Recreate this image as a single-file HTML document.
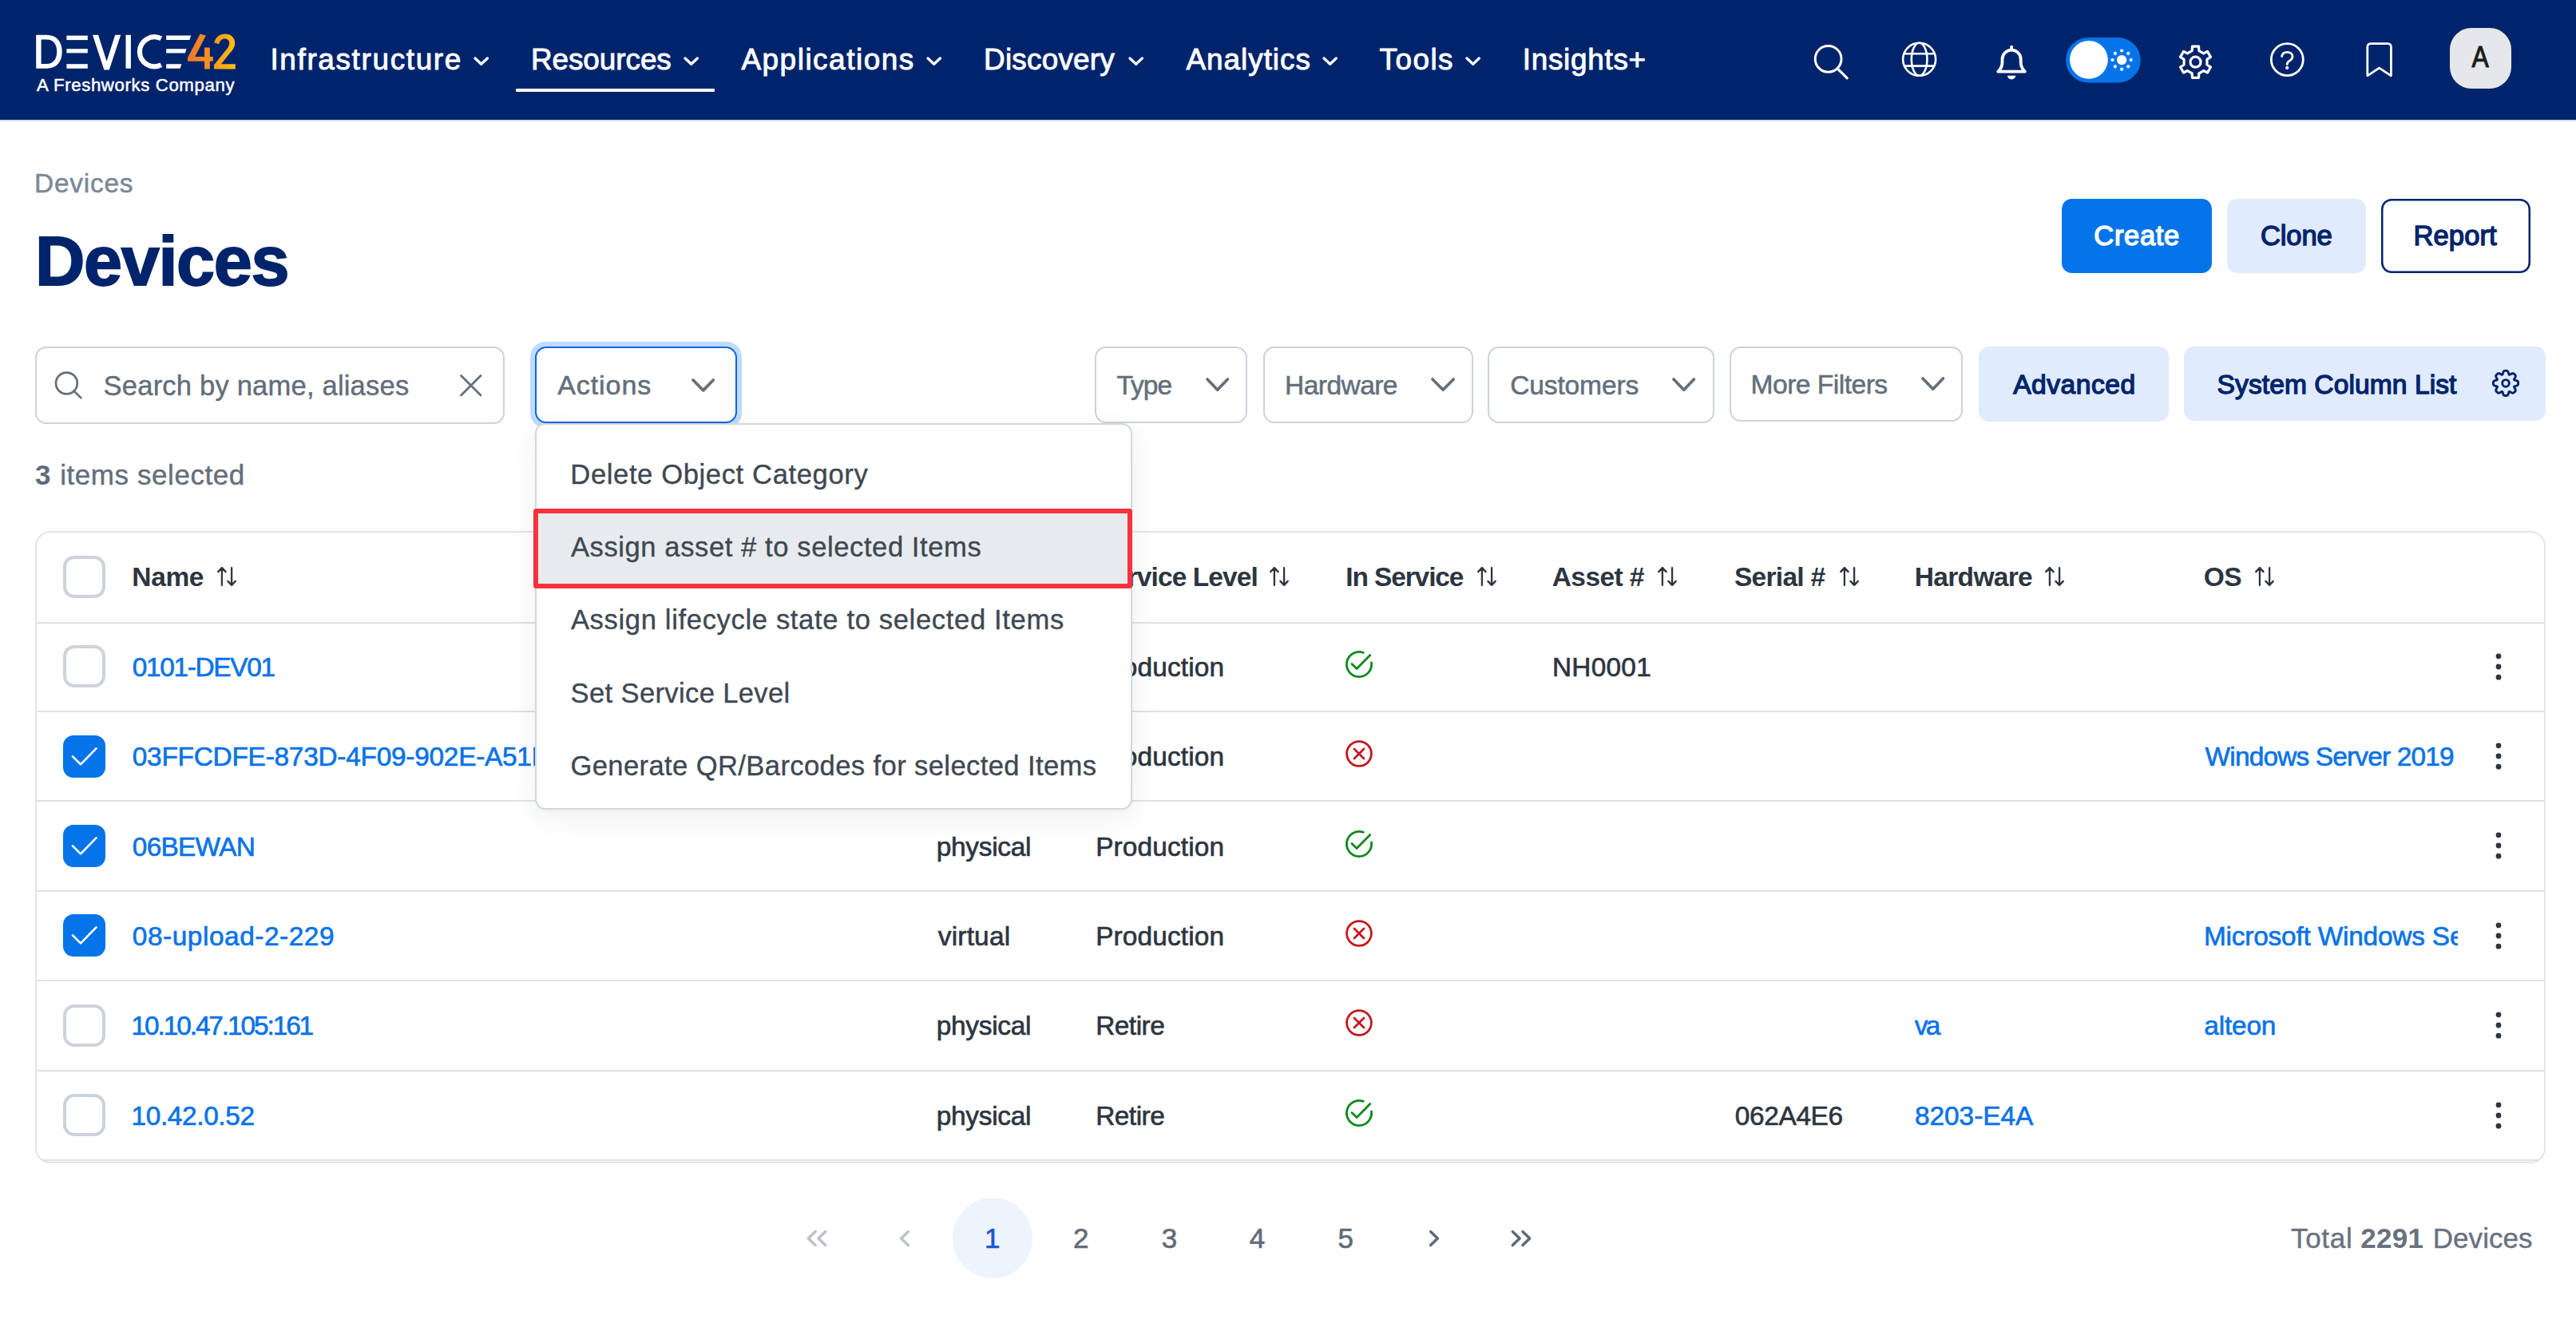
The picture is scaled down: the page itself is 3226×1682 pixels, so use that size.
<!DOCTYPE html>
<html lang="en"><head><meta charset="utf-8"><title>Devices - Device42</title>
<style>
html,body{margin:0;padding:0;background:#fff;}
body{width:3226px;height:1682px;position:relative;overflow:hidden;font-family:"Liberation Sans",sans-serif;}
.t{position:absolute;white-space:nowrap;line-height:1;font-family:"Liberation Sans",sans-serif;}
</style></head><body>
<div style="position:absolute;left:0.0px;top:0.0px;width:3226.0px;height:149.5px;box-sizing:border-box;background:#00246b;"></div><div style="position:absolute;left:0.0px;top:149.5px;width:3226.0px;height:2.0px;box-sizing:border-box;background:#d9dee8;"></div><svg style="position:absolute;left:0.0px;top:0.0px;" width="340.0" height="149.0" viewBox="0 0 340 149" fill="none"><path d="M45.2 43.8h13.5c12 0 19 8.3 19 21s-7 21-19 21H45.2z M51.6 49.6v30.4h7c8 0 12.6-5.8 12.6-15.2s-4.6-15.2-12.6-15.2z" fill="#fff" fill-rule="evenodd"/><rect x="83.4" y="44.6" width="26.4" height="5.5" fill="#fff"/><rect x="83.4" y="61.2" width="26.4" height="5.2" fill="#fff"/><rect x="83.4" y="80.2" width="26.4" height="5.6" fill="#fff"/><path d="M116 43.8h7l10.6 33 10.6-33h7l-14.4 43.8h-6.4z" fill="#fff"/><rect x="157.5" y="43.8" width="6.4" height="42" fill="#fff"/><path d="M201.80 48.32A18.5 18.5 0 1 0 201.80 81.28" stroke="#fff" stroke-width="6.2" fill="none"/><path d="M208.2 44.6h31l-1.8 5.5h-29.2z M208.2 61.2h25.4l-1.8 5.2h-23.6z M208.2 80.2h19.2l-1.8 5.6h-17.4z" fill="#fff"/><defs><linearGradient id="g42" x1="235" y1="0" x2="295" y2="0" gradientUnits="userSpaceOnUse"><stop offset="0" stop-color="#f2762a"/><stop offset="0.5" stop-color="#f7941e"/><stop offset="1" stop-color="#fdc010"/></linearGradient></defs><path d="M250.6 42.4l7.2 2-13.6 26.6h11.8V59.6h6.8v11.4h4v5.8h-4v9.6h-6.8v-9.6h-21v-4.6z" fill="url(#g42)"/><path d="M268.2 53.4c1.6-6.6 6.6-11 13.6-11 7.4 0 12.4 4.8 12.4 11.4 0 5.2-2.6 9-7.6 14.2l-9.6 12.2h17.8v6.2h-26.8v-5.2l13.8-17c3.8-4.4 5.4-7 5.4-10.2 0-3.400-2.200-5.600-5.600-5.600-3.800 0-6.400 2.400-7.400 6.800z" fill="url(#g42)"/></svg><span class="t " style="left:46.0px;top:95.5px;font-size:22.2px;letter-spacing:0.63px;color:#fff;-webkit-text-stroke:0.5px #fff;">A Freshworks Company</span><span class="t " style="left:338.4px;top:56.5px;font-size:36.9px;letter-spacing:1.66px;color:#fff;-webkit-text-stroke:0.9px #fff;">Infrastructure</span><svg style="position:absolute;left:591.8px;top:69.9px;" width="21.4" height="13.2" viewBox="0 0 21.40 13.20" fill="none"><path d="M3 3L10.7 10.2L18.4 3" stroke="#fff" stroke-width="3.3" stroke-linecap="round" stroke-linejoin="round"/></svg><span class="t " style="left:664.9px;top:56.5px;font-size:36.9px;letter-spacing:-0.05px;color:#fff;-webkit-text-stroke:0.9px #fff;">Resources</span><svg style="position:absolute;left:855.3px;top:69.9px;" width="21.4" height="13.2" viewBox="0 0 21.40 13.20" fill="none"><path d="M3 3L10.7 10.2L18.4 3" stroke="#fff" stroke-width="3.3" stroke-linecap="round" stroke-linejoin="round"/></svg><span class="t " style="left:928.4px;top:56.5px;font-size:36.9px;letter-spacing:1.54px;color:#fff;-webkit-text-stroke:0.9px #fff;">Applications</span><svg style="position:absolute;left:1158.6px;top:69.9px;" width="21.4" height="13.2" viewBox="0 0 21.40 13.20" fill="none"><path d="M3 3L10.7 10.2L18.4 3" stroke="#fff" stroke-width="3.3" stroke-linecap="round" stroke-linejoin="round"/></svg><span class="t " style="left:1232.1px;top:56.5px;font-size:36.9px;letter-spacing:0.22px;color:#fff;-webkit-text-stroke:0.9px #fff;">Discovery</span><svg style="position:absolute;left:1411.8px;top:69.9px;" width="21.4" height="13.2" viewBox="0 0 21.40 13.20" fill="none"><path d="M3 3L10.7 10.2L18.4 3" stroke="#fff" stroke-width="3.3" stroke-linecap="round" stroke-linejoin="round"/></svg><span class="t " style="left:1485.5px;top:56.5px;font-size:36.9px;letter-spacing:0.97px;color:#fff;-webkit-text-stroke:0.9px #fff;">Analytics</span><svg style="position:absolute;left:1655.0px;top:69.9px;" width="21.4" height="13.2" viewBox="0 0 21.40 13.20" fill="none"><path d="M3 3L10.7 10.2L18.4 3" stroke="#fff" stroke-width="3.3" stroke-linecap="round" stroke-linejoin="round"/></svg><span class="t " style="left:1727.5px;top:56.5px;font-size:36.9px;letter-spacing:1.48px;color:#fff;-webkit-text-stroke:0.9px #fff;">Tools</span><svg style="position:absolute;left:1833.8px;top:69.9px;" width="21.4" height="13.2" viewBox="0 0 21.40 13.20" fill="none"><path d="M3 3L10.7 10.2L18.4 3" stroke="#fff" stroke-width="3.3" stroke-linecap="round" stroke-linejoin="round"/></svg><span class="t " style="left:1906.8px;top:56.5px;font-size:36.9px;letter-spacing:0.70px;color:#fff;-webkit-text-stroke:0.9px #fff;">Insights+</span><div style="position:absolute;left:646.0px;top:111.0px;width:248.6px;height:4.3px;box-sizing:border-box;background:#fff;border-radius:1px;"></div><svg style="position:absolute;left:2200.0px;top:0.0px;" width="1026.0" height="149.0" viewBox="2200 0 1026 149" fill="none"><circle cx="2289.6" cy="73.8" r="16.4" stroke="#fff" stroke-width="3"/><path d="M2301.6 86.4L2313.2 97.8" stroke="#fff" stroke-width="3.2" stroke-linecap="round"/><g stroke="#fff" stroke-width="2.6"><circle cx="2403.6" cy="74.3" r="20.5"/><ellipse cx="2403.6" cy="74.3" rx="9.8" ry="20.5"/><path d="M2384.6 67.300h38M2384.6 82.600h38"/></g><path d="M2502.300 89.700C2505.500 86.500 2507.500 83 2507.500 78V74.200A11.600 11.600 0 0 1 2530.700 74.200V78C2530.700 83 2532.700 86.500 2535.900 89.700Z" stroke="#fff" stroke-width="3.800" stroke-linejoin="round"/><path d="M2519.100 58.600v3" stroke="#fff" stroke-width="3.800" stroke-linecap="round"/><path d="M2513.900 94.700A5.100 4.700 0 0 0 2524.300 94.700Z" fill="#fff"/><rect x="2587.100" y="47" width="93.600" height="56.600" rx="28.300" fill="#0674e9"/><circle cx="2615.900" cy="74.800" r="23.900" fill="#fff"/><circle cx="2657.100" cy="75.100" r="6.200" fill="#fff"/><circle cx="2668.70" cy="75.10" r="2.100" fill="#fff"/><circle cx="2665.30" cy="83.30" r="2.100" fill="#fff"/><circle cx="2657.10" cy="86.70" r="2.100" fill="#fff"/><circle cx="2648.90" cy="83.30" r="2.100" fill="#fff"/><circle cx="2645.50" cy="75.10" r="2.100" fill="#fff"/><circle cx="2648.90" cy="66.90" r="2.100" fill="#fff"/><circle cx="2657.10" cy="63.50" r="2.100" fill="#fff"/><circle cx="2665.30" cy="66.90" r="2.100" fill="#fff"/><path d="M2753.87 63.56L2753.47 58.10L2745.53 58.10L2745.13 63.56L2739.44 66.84L2734.51 64.46L2730.54 71.34L2735.07 74.42L2735.07 80.98L2730.54 84.06L2734.51 90.94L2739.44 88.56L2745.13 91.84L2745.53 97.30L2753.47 97.30L2753.87 91.84L2759.56 88.56L2764.49 90.94L2768.46 84.06L2763.93 80.98L2763.93 74.42L2768.46 71.34L2764.49 64.46L2759.56 66.84Z" stroke="#fff" stroke-width="3.2" stroke-linejoin="round"/><circle cx="2749.5" cy="77.7" r="6.5" stroke="#fff" stroke-width="3.2"/><circle cx="2864.300" cy="74.600" r="20" stroke="#fff" stroke-width="2.800"/><path d="M2857.600 70.600c0.600-3.400 3.200-5.200 6.800-5.200 3.800 0 6.600 2.200 6.600 5.400 0 2.600-1.600 4.200-4 5.600-2 1.200-2.800 2.200-2.800 4.200" stroke="#fff" stroke-width="2.800" stroke-linecap="round" stroke-linejoin="round"/><circle cx="2864.200" cy="84.900" r="2.100" fill="#fff"/><path d="M2964.800 94.800V58.600a4 4 0 0 1 4-4h21.600a4 4 0 0 1 4 4v36.200l-14.800-9.600z" stroke="#fff" stroke-width="2.800" stroke-linejoin="round"/></svg><div style="position:absolute;left:3068.2px;top:35.0px;width:76.4px;height:75.6px;box-sizing:border-box;background:#e5e7eb;border-radius:27px;"></div><span class="t " style="left:3094.2px;top:53.6px;font-size:36.6px;letter-spacing:0.00px;color:#1b1b1b;-webkit-text-stroke:1.0px #1b1b1b;transform:scaleX(0.87);transform-origin:50% 50%;">A</span><span class="t " style="left:43.0px;top:213.4px;font-size:33.4px;letter-spacing:0.79px;color:#7b8896;-webkit-text-stroke:0.5px #7b8896;">Devices</span><span class="t " style="left:43.9px;top:283.7px;font-size:86.4px;letter-spacing:-1.32px;color:#00246b;font-weight:bold;-webkit-text-stroke:1.8px #00246b;">Devices</span><div style="position:absolute;left:2581.6px;top:249.0px;width:188.0px;height:92.7px;box-sizing:border-box;background:#0674e9;border-radius:12.5px;"></div><span class="t " style="left:2622.3px;top:278.1px;font-size:34.6px;letter-spacing:0.63px;color:#fff;-webkit-text-stroke:1.4px #fff;">Create</span><div style="position:absolute;left:2788.7px;top:249.0px;width:174.0px;height:92.7px;box-sizing:border-box;background:#e0ebfd;border-radius:12.5px;"></div><span class="t " style="left:2830.9px;top:278.1px;font-size:34.6px;letter-spacing:-0.13px;color:#00246b;-webkit-text-stroke:1.4px #00246b;">Clone</span><div style="position:absolute;left:2981.8px;top:249.0px;width:186.8px;height:92.7px;box-sizing:border-box;background:#fff;box-shadow:inset 0 0 0 2.5px #00246b;border-radius:13px;"></div><span class="t " style="left:3022.4px;top:278.1px;font-size:34.6px;letter-spacing:0.11px;color:#00246b;-webkit-text-stroke:1.4px #00246b;">Report</span><div style="position:absolute;left:44.4px;top:434.0px;width:587.6px;height:96.6px;box-sizing:border-box;border:2px solid #ccd3da;border-radius:14px;background:#fff;"></div><svg style="position:absolute;left:64.0px;top:461.0px;" width="44.0" height="44.0" viewBox="0 0 44.00 44.00" fill="none"><circle cx="19.4" cy="19" r="13.4" stroke="#646f7b" stroke-width="2.7"/><path d="M29 29L37.400 37.400" stroke="#646f7b" stroke-width="2.7" stroke-linecap="round"/></svg><span class="t " style="left:129.6px;top:465.5px;font-size:34.6px;letter-spacing:0.18px;color:#626d79;-webkit-text-stroke:0.4px #626d79;">Search by name, aliases</span><svg style="position:absolute;left:572.0px;top:465.0px;" width="36.0" height="36.0" viewBox="0 0 36.00 36.00" fill="none"><path d="M5.500 5.500L30 30M30 5.500L5.500 30" stroke="#646f7b" stroke-width="2.8" stroke-linecap="round"/></svg><div style="position:absolute;left:663.6px;top:428.0px;width:265.4px;height:108.0px;box-sizing:border-box;background:#bfdbfe;border-radius:19px;"></div><div style="position:absolute;left:669.8px;top:433.8px;width:253.4px;height:96.2px;box-sizing:border-box;border:2px solid #0868e0;border-radius:14px;background:#fff;"></div><span class="t " style="left:698.2px;top:464.9px;font-size:34px;letter-spacing:0.93px;color:#646f7b;-webkit-text-stroke:0.6px #646f7b;">Actions</span><svg style="position:absolute;left:865.4px;top:472.6px;" width="31.3" height="18.9" viewBox="0 0 31.30 18.90" fill="none"><path d="M3 3L15.7 15.9L28.3 3" stroke="#646f7b" stroke-width="3.7" stroke-linecap="round" stroke-linejoin="round"/></svg><div style="position:absolute;left:1370.6px;top:434.0px;width:191.6px;height:96.4px;box-sizing:border-box;border:2px solid #ccd3da;border-radius:14px;background:#fff;"></div><span class="t " style="left:1398.5px;top:465.8px;font-size:33.6px;letter-spacing:-1.05px;color:#646f7b;-webkit-text-stroke:0.55px #646f7b;">Type</span><svg style="position:absolute;left:1508.8px;top:472.4px;" width="31.4" height="19.3" viewBox="0 0 31.40 19.30" fill="none"><path d="M3 3L15.7 16.3L28.4 3" stroke="#646f7b" stroke-width="3.7" stroke-linecap="round" stroke-linejoin="round"/></svg><div style="position:absolute;left:1581.5px;top:434.0px;width:263.8px;height:96.4px;box-sizing:border-box;border:2px solid #ccd3da;border-radius:14px;background:#fff;"></div><span class="t " style="left:1609.1px;top:465.8px;font-size:33.6px;letter-spacing:-0.59px;color:#646f7b;-webkit-text-stroke:0.55px #646f7b;">Hardware</span><svg style="position:absolute;left:1790.6px;top:472.4px;" width="32.3" height="19.3" viewBox="0 0 32.30 19.30" fill="none"><path d="M3 3L16.2 16.3L29.3 3" stroke="#646f7b" stroke-width="3.7" stroke-linecap="round" stroke-linejoin="round"/></svg><div style="position:absolute;left:1863.4px;top:434.0px;width:283.8px;height:96.4px;box-sizing:border-box;border:2px solid #ccd3da;border-radius:14px;background:#fff;"></div><span class="t " style="left:1891.2px;top:465.8px;font-size:33.6px;letter-spacing:-0.16px;color:#646f7b;-webkit-text-stroke:0.55px #646f7b;">Customers</span><svg style="position:absolute;left:2092.8px;top:472.4px;" width="31.4" height="19.3" viewBox="0 0 31.40 19.30" fill="none"><path d="M3 3L15.7 16.3L28.4 3" stroke="#646f7b" stroke-width="3.7" stroke-linecap="round" stroke-linejoin="round"/></svg><div style="position:absolute;left:2165.5px;top:434.0px;width:292.1px;height:94.0px;box-sizing:border-box;border:2px solid #ccd3da;border-radius:14px;background:#fff;"></div><span class="t " style="left:2192.5px;top:464.8px;font-size:33.6px;letter-spacing:-0.51px;color:#646f7b;-webkit-text-stroke:0.55px #646f7b;">More Filters</span><svg style="position:absolute;left:2404.8px;top:471.4px;" width="31.4" height="19.3" viewBox="0 0 31.40 19.30" fill="none"><path d="M3 3L15.7 16.3L28.4 3" stroke="#646f7b" stroke-width="3.7" stroke-linecap="round" stroke-linejoin="round"/></svg><div style="position:absolute;left:2478.0px;top:433.9px;width:237.8px;height:94.3px;box-sizing:border-box;background:#e0ebfd;border-radius:12.5px;"></div><span class="t " style="left:2521.2px;top:464.6px;font-size:33.6px;letter-spacing:0.52px;color:#00246b;-webkit-text-stroke:1.35px #00246b;">Advanced</span><div style="position:absolute;left:2735.0px;top:433.9px;width:452.8px;height:93.5px;box-sizing:border-box;background:#e0ebfd;border-radius:12.5px;"></div><span class="t " style="left:2776.6px;top:464.6px;font-size:33.6px;letter-spacing:0.07px;color:#00246b;-webkit-text-stroke:1.35px #00246b;">System Column List</span><svg style="position:absolute;left:3110px;top:452px" width="56" height="56" viewBox="3110 452 56 56" fill="none"><path d="M3153.60 479.90L3153.60 480.51L3153.56 481.12L3153.40 481.72L3153.03 482.28L3152.39 482.76L3151.53 483.15L3150.55 483.44L3149.61 483.67L3148.90 483.92L3148.53 484.26L3148.55 484.76L3148.88 485.44L3149.37 486.27L3149.86 487.17L3150.20 488.05L3150.31 488.84L3150.18 489.50L3149.87 490.03L3149.46 490.50L3149.03 490.93L3148.60 491.36L3148.13 491.77L3147.60 492.08L3146.94 492.21L3146.15 492.10L3145.27 491.76L3144.37 491.27L3143.54 490.78L3142.86 490.45L3142.36 490.43L3142.02 490.80L3141.77 491.51L3141.54 492.45L3141.25 493.43L3140.86 494.29L3140.38 494.93L3139.82 495.30L3139.22 495.46L3138.61 495.50L3138.00 495.50L3137.39 495.50L3136.78 495.46L3136.18 495.30L3135.62 494.93L3135.14 494.29L3134.75 493.43L3134.46 492.45L3134.23 491.51L3133.98 490.80L3133.64 490.43L3133.14 490.45L3132.46 490.78L3131.63 491.27L3130.73 491.76L3129.85 492.10L3129.06 492.21L3128.40 492.08L3127.87 491.77L3127.40 491.36L3126.97 490.93L3126.54 490.50L3126.13 490.03L3125.82 489.50L3125.69 488.84L3125.80 488.05L3126.14 487.17L3126.63 486.27L3127.12 485.44L3127.45 484.76L3127.47 484.26L3127.10 483.92L3126.39 483.67L3125.45 483.44L3124.47 483.15L3123.61 482.76L3122.97 482.28L3122.60 481.72L3122.44 481.12L3122.40 480.51L3122.40 479.90L3122.40 479.29L3122.44 478.68L3122.60 478.08L3122.97 477.52L3123.61 477.04L3124.47 476.65L3125.45 476.36L3126.39 476.13L3127.10 475.88L3127.47 475.54L3127.45 475.04L3127.12 474.36L3126.63 473.53L3126.14 472.63L3125.80 471.75L3125.69 470.96L3125.82 470.30L3126.13 469.77L3126.54 469.30L3126.97 468.87L3127.40 468.44L3127.87 468.03L3128.40 467.72L3129.06 467.59L3129.85 467.70L3130.73 468.04L3131.63 468.53L3132.46 469.02L3133.14 469.35L3133.64 469.37L3133.98 469.00L3134.23 468.29L3134.46 467.35L3134.75 466.37L3135.14 465.51L3135.62 464.87L3136.18 464.50L3136.78 464.34L3137.39 464.30L3138.00 464.30L3138.61 464.30L3139.22 464.34L3139.82 464.50L3140.38 464.87L3140.86 465.51L3141.25 466.37L3141.54 467.35L3141.77 468.29L3142.02 469.00L3142.36 469.37L3142.86 469.35L3143.54 469.02L3144.37 468.53L3145.27 468.04L3146.15 467.70L3146.94 467.59L3147.60 467.72L3148.13 468.03L3148.60 468.44L3149.03 468.87L3149.46 469.30L3149.87 469.77L3150.18 470.30L3150.31 470.96L3150.20 471.75L3149.86 472.63L3149.37 473.53L3148.88 474.36L3148.55 475.04L3148.53 475.54L3148.90 475.88L3149.61 476.13L3150.55 476.36L3151.53 476.65L3152.39 477.04L3153.03 477.52L3153.40 478.08L3153.56 478.68L3153.60 479.29Z" stroke="#00246b" stroke-width="2.9" stroke-linejoin="round"/><circle cx="3138" cy="479.9" r="4.3" stroke="#00246b" stroke-width="2.9"/></svg><span class="t " style="left:44.0px;top:576.7px;font-size:35px;letter-spacing:0.00px;color:#616b77;font-weight:bold;">3</span><span class="t " style="left:75.2px;top:576.7px;font-size:35px;letter-spacing:0.57px;color:#646e7a;-webkit-text-stroke:0.4px #646e7a;">items selected</span><div style="position:absolute;left:44.0px;top:665.0px;width:3144.0px;height:792.0px;box-sizing:border-box;border:2px solid #e1e4e9;border-radius:19px;background:#fff;"></div><div style="position:absolute;left:46.0px;top:779.0px;width:3140.0px;height:2.0px;box-sizing:border-box;background:#dde1e7;"></div><div style="position:absolute;left:46.0px;top:890.0px;width:3140.0px;height:2.0px;box-sizing:border-box;background:#dde1e7;"></div><div style="position:absolute;left:46.0px;top:1002.0px;width:3140.0px;height:2.0px;box-sizing:border-box;background:#dde1e7;"></div><div style="position:absolute;left:46.0px;top:1115.0px;width:3140.0px;height:2.0px;box-sizing:border-box;background:#dde1e7;"></div><div style="position:absolute;left:46.0px;top:1227.0px;width:3140.0px;height:2.0px;box-sizing:border-box;background:#dde1e7;"></div><div style="position:absolute;left:46.0px;top:1340.0px;width:3140.0px;height:2.0px;box-sizing:border-box;background:#dde1e7;"></div><div style="position:absolute;left:53.0px;top:1452.0px;width:3126.0px;height:2.0px;box-sizing:border-box;background:#dde1e7;"></div><span class="t " style="left:165.3px;top:705.6px;font-size:33.5px;letter-spacing:-0.35px;color:#2d3540;font-weight:bold;">Name</span><svg style="position:absolute;left:266.5px;top:704.0px" width="36" height="36" viewBox="266.5 704.0 36 36" fill="none"><path d="M277.4 732.9V711.1M272.7 716.1L277.4 711.1L282.1 716.1M289.6 711.1V732.9M284.9 727.9L289.6 732.9L294.3 727.9" stroke="#2d3540" stroke-width="2.300" stroke-linecap="round" stroke-linejoin="round"/></svg><span class="t " style="left:1173.2px;top:705.6px;font-size:33.5px;letter-spacing:-2.93px;color:#2d3540;font-weight:bold;">Type</span><svg style="position:absolute;left:1251.0px;top:704.0px" width="36" height="36" viewBox="1251.0 704.0 36 36" fill="none"><path d="M1261.9 732.9V711.1M1257.2 716.1L1261.9 711.1L1266.6 716.1M1274.1 711.1V732.9M1269.4 727.9L1274.1 732.9L1278.8 727.9" stroke="#2d3540" stroke-width="2.300" stroke-linecap="round" stroke-linejoin="round"/></svg><span class="t " style="left:1372.6px;top:705.6px;font-size:33.5px;letter-spacing:-0.92px;color:#2d3540;font-weight:bold;">Service Level</span><svg style="position:absolute;left:1585.4px;top:704.0px" width="36" height="36" viewBox="1585.4 704.0 36 36" fill="none"><path d="M1596.3 732.9V711.1M1591.6 716.1L1596.3 711.1L1601.0 716.1M1608.5 711.1V732.9M1603.8 727.9L1608.5 732.9L1613.2 727.9" stroke="#2d3540" stroke-width="2.300" stroke-linecap="round" stroke-linejoin="round"/></svg><span class="t " style="left:1685.2px;top:705.6px;font-size:33.5px;letter-spacing:-1.11px;color:#2d3540;font-weight:bold;">In Service</span><svg style="position:absolute;left:1845.0px;top:704.0px" width="36" height="36" viewBox="1845.0 704.0 36 36" fill="none"><path d="M1855.9 732.9V711.1M1851.2 716.1L1855.9 711.1L1860.6 716.1M1868.1 711.1V732.9M1863.4 727.9L1868.1 732.9L1872.8 727.9" stroke="#2d3540" stroke-width="2.300" stroke-linecap="round" stroke-linejoin="round"/></svg><span class="t " style="left:1943.8px;top:705.6px;font-size:33.5px;letter-spacing:-0.62px;color:#2d3540;font-weight:bold;">Asset #</span><svg style="position:absolute;left:2071.2px;top:704.0px" width="36" height="36" viewBox="2071.2 704.0 36 36" fill="none"><path d="M2082.1 732.9V711.1M2077.4 716.1L2082.1 711.1L2086.8 716.1M2094.3 711.1V732.9M2089.6 727.9L2094.3 732.9L2099.0 727.9" stroke="#2d3540" stroke-width="2.300" stroke-linecap="round" stroke-linejoin="round"/></svg><span class="t " style="left:2172.0px;top:705.6px;font-size:33.5px;letter-spacing:-0.73px;color:#2d3540;font-weight:bold;">Serial #</span><svg style="position:absolute;left:2298.6px;top:704.0px" width="36" height="36" viewBox="2298.6 704.0 36 36" fill="none"><path d="M2309.5 732.9V711.1M2304.8 716.1L2309.5 711.1L2314.2 716.1M2321.7 711.1V732.9M2317.0 727.9L2321.7 732.9L2326.4 727.9" stroke="#2d3540" stroke-width="2.300" stroke-linecap="round" stroke-linejoin="round"/></svg><span class="t " style="left:2397.8px;top:705.6px;font-size:33.5px;letter-spacing:-0.68px;color:#2d3540;font-weight:bold;">Hardware</span><svg style="position:absolute;left:2556.4px;top:704.0px" width="36" height="36" viewBox="2556.4 704.0 36 36" fill="none"><path d="M2567.3 732.9V711.1M2562.6 716.1L2567.3 711.1L2572.0 716.1M2579.5 711.1V732.9M2574.8 727.9L2579.5 732.9L2584.2 727.9" stroke="#2d3540" stroke-width="2.300" stroke-linecap="round" stroke-linejoin="round"/></svg><span class="t " style="left:2759.8px;top:705.6px;font-size:33.5px;letter-spacing:-0.72px;color:#2d3540;font-weight:bold;">OS</span><svg style="position:absolute;left:2818.6px;top:704.0px" width="36" height="36" viewBox="2818.6 704.0 36 36" fill="none"><path d="M2829.5 732.9V711.1M2824.8 716.1L2829.5 711.1L2834.2 716.1M2841.7 711.1V732.9M2837.0 727.9L2841.7 732.9L2846.4 727.9" stroke="#2d3540" stroke-width="2.300" stroke-linecap="round" stroke-linejoin="round"/></svg><div style="position:absolute;left:79.2px;top:695.9px;width:52.7px;height:53.0px;box-sizing:border-box;border:4px solid #cdd3db;border-radius:14px;background:#fff;"></div><div style="position:absolute;left:79.2px;top:808.0px;width:52.7px;height:53.0px;box-sizing:border-box;border:4px solid #cdd3db;border-radius:14px;background:#fff;"></div><span class="t " style="left:165.8px;top:818.6px;font-size:33.4px;letter-spacing:-1.33px;color:#0a73e8;-webkit-text-stroke:0.65px #0a73e8;">0101-DEV01</span><span class="t " style="left:1172.8px;top:818.6px;font-size:33.4px;letter-spacing:-0.30px;color:#2d3540;-webkit-text-stroke:0.65px #2d3540;">physical</span><span class="t " style="left:1372.2px;top:818.6px;font-size:33.4px;letter-spacing:0.14px;color:#2d3540;-webkit-text-stroke:0.65px #2d3540;">Production</span><svg style="position:absolute;left:1681.7px;top:811.6px" width="40" height="40" viewBox="1681.7 811.6 40 40" fill="none"><path d="M1707.04 816.94A15.6 15.6 0 1 0 1717.15 829.43" stroke="#0f8a1b" stroke-width="2.800" stroke-linecap="round"/><path d="M1692.60 831.20L1698.80 837.20L1715.50 820.20" stroke="#0f8a1b" stroke-width="2.800" stroke-linecap="round" stroke-linejoin="round"/></svg><span class="t " style="left:1944.0px;top:818.6px;font-size:33.4px;letter-spacing:0.24px;color:#2d3540;-webkit-text-stroke:0.65px #2d3540;">NH0001</span><svg style="position:absolute;left:3121.2px;top:814.5px" width="16" height="40" viewBox="3121.2 814.5 16 40" fill="none"><circle cx="3129.2" cy="821.3" r="3.400" fill="#2d3540"/><circle cx="3129.2" cy="834.5" r="3.400" fill="#2d3540"/><circle cx="3129.2" cy="847.7" r="3.400" fill="#2d3540"/></svg><div style="position:absolute;left:79.0px;top:920.8px;width:53.0px;height:53.0px;box-sizing:border-box;background:#0674e9;border-radius:13px;"></div><svg style="position:absolute;left:79.0px;top:920.8px;" width="53.0" height="53.0" viewBox="0 0 53.00 53.00" fill="none"><path d="M12 26.400L22 36.400L41.500 16.400" stroke="#fff" stroke-width="2.700" stroke-linecap="round" stroke-linejoin="round"/></svg><span class="t " style="left:165.8px;top:931.4px;font-size:33.4px;letter-spacing:-0.25px;color:#0a73e8;-webkit-text-stroke:0.65px #0a73e8;">03FFCDFE-873D-4F09-902E-A51B2C7D90AA</span><span class="t " style="left:1174.8px;top:931.4px;font-size:33.4px;letter-spacing:0.20px;color:#2d3540;-webkit-text-stroke:0.65px #2d3540;">virtual</span><span class="t " style="left:1372.2px;top:931.4px;font-size:33.4px;letter-spacing:0.14px;color:#2d3540;-webkit-text-stroke:0.65px #2d3540;">Production</span><svg style="position:absolute;left:1681.7px;top:924.4px" width="40" height="40" viewBox="1681.7 924.4 40 40" fill="none"><circle cx="1701.7" cy="944.4" r="15.4" stroke="#c5161d" stroke-width="2.800"/><path d="M1695.7  938.4L1707.7 950.4M1707.7 938.4L1695.7 950.4" stroke="#c5161d" stroke-width="2.800" stroke-linecap="round"/></svg><span class="t " style="left:2761.6px;top:931.4px;font-size:33.4px;letter-spacing:-0.82px;color:#0a73e8;-webkit-text-stroke:0.65px #0a73e8;">Windows Server 2019</span><svg style="position:absolute;left:3121.2px;top:927.3px" width="16" height="40" viewBox="3121.2 927.3 16 40" fill="none"><circle cx="3129.2" cy="934.0999999999999" r="3.400" fill="#2d3540"/><circle cx="3129.2" cy="947.3" r="3.400" fill="#2d3540"/><circle cx="3129.2" cy="960.5" r="3.400" fill="#2d3540"/></svg><div style="position:absolute;left:79.0px;top:1032.9px;width:53.0px;height:53.0px;box-sizing:border-box;background:#0674e9;border-radius:13px;"></div><svg style="position:absolute;left:79.0px;top:1032.9px;" width="53.0" height="53.0" viewBox="0 0 53.00 53.00" fill="none"><path d="M12 26.400L22 36.400L41.500 16.400" stroke="#fff" stroke-width="2.700" stroke-linecap="round" stroke-linejoin="round"/></svg><span class="t " style="left:165.8px;top:1043.5px;font-size:33.4px;letter-spacing:-0.72px;color:#0a73e8;-webkit-text-stroke:0.65px #0a73e8;">06BEWAN</span><span class="t " style="left:1172.8px;top:1043.5px;font-size:33.4px;letter-spacing:-0.30px;color:#2d3540;-webkit-text-stroke:0.65px #2d3540;">physical</span><span class="t " style="left:1372.2px;top:1043.5px;font-size:33.4px;letter-spacing:0.14px;color:#2d3540;-webkit-text-stroke:0.65px #2d3540;">Production</span><svg style="position:absolute;left:1681.7px;top:1036.5px" width="40" height="40" viewBox="1681.7 1036.5 40 40" fill="none"><path d="M1707.04 1041.84A15.6 15.6 0 1 0 1717.15 1054.33" stroke="#0f8a1b" stroke-width="2.800" stroke-linecap="round"/><path d="M1692.60 1056.10L1698.80 1062.10L1715.50 1045.10" stroke="#0f8a1b" stroke-width="2.800" stroke-linecap="round" stroke-linejoin="round"/></svg><svg style="position:absolute;left:3121.2px;top:1039.4px" width="16" height="40" viewBox="3121.2 1039.4 16 40" fill="none"><circle cx="3129.2" cy="1046.2" r="3.400" fill="#2d3540"/><circle cx="3129.2" cy="1059.4" r="3.400" fill="#2d3540"/><circle cx="3129.2" cy="1072.6000000000001" r="3.400" fill="#2d3540"/></svg><div style="position:absolute;left:79.0px;top:1145.2px;width:53.0px;height:53.0px;box-sizing:border-box;background:#0674e9;border-radius:13px;"></div><svg style="position:absolute;left:79.0px;top:1145.2px;" width="53.0" height="53.0" viewBox="0 0 53.00 53.00" fill="none"><path d="M12 26.400L22 36.400L41.500 16.400" stroke="#fff" stroke-width="2.700" stroke-linecap="round" stroke-linejoin="round"/></svg><span class="t " style="left:165.8px;top:1155.8px;font-size:33.4px;letter-spacing:0.55px;color:#0a73e8;-webkit-text-stroke:0.65px #0a73e8;">08-upload-2-229</span><span class="t " style="left:1174.8px;top:1155.8px;font-size:33.4px;letter-spacing:0.20px;color:#2d3540;-webkit-text-stroke:0.65px #2d3540;">virtual</span><span class="t " style="left:1372.2px;top:1155.8px;font-size:33.4px;letter-spacing:0.14px;color:#2d3540;-webkit-text-stroke:0.65px #2d3540;">Production</span><svg style="position:absolute;left:1681.7px;top:1148.8px" width="40" height="40" viewBox="1681.7 1148.8 40 40" fill="none"><circle cx="1701.7" cy="1168.8" r="15.4" stroke="#c5161d" stroke-width="2.800"/><path d="M1695.7  1162.8L1707.7 1174.8M1707.7 1162.8L1695.7 1174.8" stroke="#c5161d" stroke-width="2.800" stroke-linecap="round"/></svg><div style="position:absolute;left:2755px;top:1141.7px;width:323.2px;height:60px;overflow:hidden;"><span class="t " style="left:5.0px;top:14.1px;font-size:33.4px;letter-spacing:-0.20px;color:#0a73e8;-webkit-text-stroke:0.65px #0a73e8;">Microsoft Windows Server 2016</span></div><svg style="position:absolute;left:3121.2px;top:1151.7px" width="16" height="40" viewBox="3121.2 1151.7 16 40" fill="none"><circle cx="3129.2" cy="1158.5" r="3.400" fill="#2d3540"/><circle cx="3129.2" cy="1171.7" r="3.400" fill="#2d3540"/><circle cx="3129.2" cy="1184.9" r="3.400" fill="#2d3540"/></svg><div style="position:absolute;left:79.2px;top:1257.6px;width:52.7px;height:53.0px;box-sizing:border-box;border:4px solid #cdd3db;border-radius:14px;background:#fff;"></div><span class="t " style="left:164.6px;top:1268.2px;font-size:33.4px;letter-spacing:-2.09px;color:#0a73e8;-webkit-text-stroke:0.65px #0a73e8;">10.10.47.105:161</span><span class="t " style="left:1172.8px;top:1268.2px;font-size:33.4px;letter-spacing:-0.30px;color:#2d3540;-webkit-text-stroke:0.65px #2d3540;">physical</span><span class="t " style="left:1372.2px;top:1268.2px;font-size:33.4px;letter-spacing:-0.50px;color:#2d3540;-webkit-text-stroke:0.65px #2d3540;">Retire</span><svg style="position:absolute;left:1681.7px;top:1261.2px" width="40" height="40" viewBox="1681.7 1261.2 40 40" fill="none"><circle cx="1701.7" cy="1281.1999999999998" r="15.4" stroke="#c5161d" stroke-width="2.800"/><path d="M1695.7  1275.1999999999998L1707.7 1287.1999999999998M1707.7 1275.1999999999998L1695.7 1287.1999999999998" stroke="#c5161d" stroke-width="2.800" stroke-linecap="round"/></svg><span class="t " style="left:2397.8px;top:1268.2px;font-size:33.4px;letter-spacing:-2.81px;color:#0a73e8;-webkit-text-stroke:0.65px #0a73e8;">va</span><span class="t " style="left:2760.3px;top:1268.2px;font-size:33.4px;letter-spacing:-0.17px;color:#0a73e8;-webkit-text-stroke:0.65px #0a73e8;">alteon</span><svg style="position:absolute;left:3121.2px;top:1264.1px" width="16" height="40" viewBox="3121.2 1264.1 16 40" fill="none"><circle cx="3129.2" cy="1270.8999999999999" r="3.400" fill="#2d3540"/><circle cx="3129.2" cy="1284.1" r="3.400" fill="#2d3540"/><circle cx="3129.2" cy="1297.3" r="3.400" fill="#2d3540"/></svg><div style="position:absolute;left:79.2px;top:1370.0px;width:52.7px;height:53.0px;box-sizing:border-box;border:4px solid #cdd3db;border-radius:14px;background:#fff;"></div><span class="t " style="left:164.6px;top:1380.6px;font-size:33.4px;letter-spacing:-0.38px;color:#0a73e8;-webkit-text-stroke:0.65px #0a73e8;">10.42.0.52</span><span class="t " style="left:1172.8px;top:1380.6px;font-size:33.4px;letter-spacing:-0.30px;color:#2d3540;-webkit-text-stroke:0.65px #2d3540;">physical</span><span class="t " style="left:1372.2px;top:1380.6px;font-size:33.4px;letter-spacing:-0.50px;color:#2d3540;-webkit-text-stroke:0.65px #2d3540;">Retire</span><svg style="position:absolute;left:1681.7px;top:1373.6px" width="40" height="40" viewBox="1681.7 1373.6 40 40" fill="none"><path d="M1707.04 1378.94A15.6 15.6 0 1 0 1717.15 1391.43" stroke="#0f8a1b" stroke-width="2.800" stroke-linecap="round"/><path d="M1692.60 1393.20L1698.80 1399.20L1715.50 1382.20" stroke="#0f8a1b" stroke-width="2.800" stroke-linecap="round" stroke-linejoin="round"/></svg><span class="t " style="left:2172.8px;top:1380.6px;font-size:33.4px;letter-spacing:-0.35px;color:#2d3540;-webkit-text-stroke:0.65px #2d3540;">062A4E6</span><span class="t " style="left:2397.9px;top:1380.6px;font-size:33.4px;letter-spacing:-0.01px;color:#0a73e8;-webkit-text-stroke:0.65px #0a73e8;">8203-E4A</span><svg style="position:absolute;left:3121.2px;top:1376.5px" width="16" height="40" viewBox="3121.2 1376.5 16 40" fill="none"><circle cx="3129.2" cy="1383.3" r="3.400" fill="#2d3540"/><circle cx="3129.2" cy="1396.5" r="3.400" fill="#2d3540"/><circle cx="3129.2" cy="1409.7" r="3.400" fill="#2d3540"/></svg><div style="position:absolute;left:1192.7px;top:1500.4px;width:100.6px;height:100.6px;box-sizing:border-box;background:#eef4fe;border-radius:50%;"></div><span class="t " style="left:1233.1px;top:1532.9px;font-size:35px;letter-spacing:0.00px;color:#1d56d8;-webkit-text-stroke:0.7px #1d56d8;">1</span><span class="t " style="left:1344.1px;top:1532.9px;font-size:35px;letter-spacing:0.00px;color:#616c78;-webkit-text-stroke:0.7px #616c78;">2</span><span class="t " style="left:1454.7px;top:1532.9px;font-size:35px;letter-spacing:0.00px;color:#616c78;-webkit-text-stroke:0.7px #616c78;">3</span><span class="t " style="left:1564.7px;top:1532.9px;font-size:35px;letter-spacing:0.00px;color:#616c78;-webkit-text-stroke:0.7px #616c78;">4</span><span class="t " style="left:1675.4px;top:1532.9px;font-size:35px;letter-spacing:0.00px;color:#616c78;-webkit-text-stroke:0.7px #616c78;">5</span><svg style="position:absolute;left:1002.8px;top:1530.7px" width="40" height="40" viewBox="1002.8 1530.7 40 40" fill="none"><path d="M1020.9 1542.2L1012.1 1550.7L1020.9 1559.2M1033.5 1542.2L1024.7 1550.7L1033.5 1559.2" stroke="#bcc2c9" stroke-width="3.500" stroke-linecap="round" stroke-linejoin="round"/></svg><svg style="position:absolute;left:1113.2px;top:1530.7px" width="40" height="40" viewBox="1113.2 1530.7 40 40" fill="none"><path d="M1137.6 1542.2L1128.8 1550.7L1137.6 1559.2" stroke="#bcc2c9" stroke-width="3.500" stroke-linecap="round" stroke-linejoin="round"/></svg><svg style="position:absolute;left:1775.6px;top:1530.7px" width="40" height="40" viewBox="1775.6 1530.7 40 40" fill="none"><path d="M1791.2 1542.2L1800.0 1550.7L1791.2 1559.2" stroke="#5f6a76" stroke-width="3.500" stroke-linecap="round" stroke-linejoin="round"/></svg><svg style="position:absolute;left:1885.3px;top:1530.7px" width="40" height="40" viewBox="1885.3 1530.7 40 40" fill="none"><path d="M1894.6 1542.2L1903.4 1550.7L1894.6 1559.2M1907.2 1542.2L1916.0 1550.7L1907.2 1559.2" stroke="#5f6a76" stroke-width="3.500" stroke-linecap="round" stroke-linejoin="round"/></svg><span class="t " style="left:2869.0px;top:1533.1px;font-size:35px;letter-spacing:0.70px;color:#68727e;-webkit-text-stroke:0.4px #68727e;">Total</span><span class="t " style="left:2956.3px;top:1533.1px;font-size:35px;letter-spacing:0.30px;color:#68727e;font-weight:bold;">2291</span><span class="t " style="left:3046.8px;top:1533.1px;font-size:35px;letter-spacing:0.04px;color:#68727e;-webkit-text-stroke:0.4px #68727e;">Devices</span><div style="position:absolute;left:669.6px;top:530.0px;width:748.2px;height:484.0px;box-sizing:border-box;background:#fff;border:2px solid #d2d8de;border-radius:13px;box-shadow:0 10px 36px rgba(30,40,60,0.075),0 2px 5px rgba(30,40,60,0.03);"></div><div style="position:absolute;left:668.3px;top:637.0px;width:749.6px;height:100.0px;box-sizing:border-box;background:#e8ebee;border:6px solid #f6323f;border-radius:3.5px;"></div><span class="t " style="left:714.3px;top:577.0px;font-size:34.6px;letter-spacing:0.62px;color:#3f4852;-webkit-text-stroke:0.35px #3f4852;">Delete Object Category</span><span class="t " style="left:714.9px;top:668.3px;font-size:34.6px;letter-spacing:0.58px;color:#3f4852;-webkit-text-stroke:0.35px #3f4852;">Assign asset # to selected Items</span><span class="t " style="left:714.9px;top:758.5px;font-size:34.6px;letter-spacing:0.65px;color:#3f4852;-webkit-text-stroke:0.35px #3f4852;">Assign lifecycle state to selected Items</span><span class="t " style="left:714.6px;top:851.1px;font-size:34.6px;letter-spacing:0.35px;color:#3f4852;-webkit-text-stroke:0.35px #3f4852;">Set Service Level</span><span class="t " style="left:714.4px;top:942.1px;font-size:34.6px;letter-spacing:0.39px;color:#3f4852;-webkit-text-stroke:0.35px #3f4852;">Generate QR/Barcodes for selected Items</span>
</body></html>
